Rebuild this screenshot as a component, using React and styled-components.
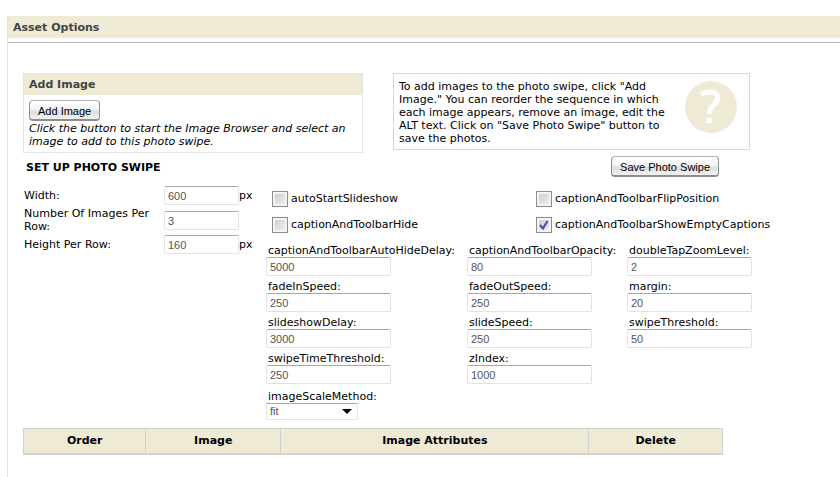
import React from "react";
import styled, { createGlobalStyle } from "styled-components";

const cream = "#efead6";
const line = "#d9d9d9";

const GlobalStyle = createGlobalStyle`
  *, *::before, *::after { box-sizing: border-box; }
  body {
    margin: 0;
    background: #fff;
    color: #000;
    font: 11px/13px Verdana, "DejaVu Sans", sans-serif;
  }
`;

const Page = styled.main`
  margin: 16px 0 0 7px;
  min-height: calc(100vh - 16px);
  border-left: 1px solid #e2e2e2;
`;

const PageTitle = styled.h1`
  margin: 0;
  padding: 1px 5px 0;
  background: ${cream};
  color: #444;
  font-size: 11px;
  line-height: 21px;
`;

const Content = styled.div`
  margin-top: 4px;
  padding: 30px 90px 0 15px;
  border-top: 1px solid #b8b8b8;
`;

const TopRow = styled.div`
  display: grid;
  grid-template-columns: 340fr 357fr;
  align-items: start;
  gap: 30px;
`;

const Panel = styled.section`
  border: 1px solid #e3e3e3;
  padding-bottom: 4px;
`;

const PanelTitle = styled.h2`
  margin: 0;
  padding: 0 5px;
  background: ${cream};
  color: #444;
  font-size: 11px;
  line-height: 21px;
`;

const PanelBody = styled.div`
  padding: 5px 5px 0;
`;

const Hint = styled.p`
  margin: 1px 0 0;
  font-style: italic;
`;

const Button = styled.button`
  display: block;
  height: 21px;
  padding: 1px 8px 0;
  border: 1px solid #8c8c8c;
  border-top-color: #b0b0b0;
  border-bottom-width: 2px;
  border-radius: 4px;
  background: linear-gradient(#fff 0%, #f3f3f3 45%, #dedede 60%, #f2f2f2 100%);
  color: #000;
  font: 11px/16px Arial, "Liberation Sans", sans-serif;
  white-space: nowrap;
`;

const Help = styled.aside`
  display: flex;
  gap: 4px;
  padding: 6px 12px 4px 5px;
  border: 1px solid ${line};
`;

const HelpText = styled.p`
  flex: 1;
  margin: 0;
`;

const HelpIcon = styled.svg`
  flex: none;
  width: 52px;
  height: 54px;
`;

const SetupBar = styled.div`
  display: flex;
  justify-content: space-between;
  align-items: center;
  margin-top: 3px;
  padding: 0 31px 0 3px;
`;

const SetupTitle = styled.h2`
  margin: 0;
  padding-top: 2px;
  font-size: 11px;
  line-height: 19px;
`;

const Form = styled.form`
  display: grid;
  grid-template-columns: 243px 1fr;
  margin-top: 9px;
`;

const SizeFields = styled.div`
  display: grid;
  grid-template-columns: 140px 75px auto;
  align-content: start;
  align-items: center;
  justify-content: start;
  row-gap: 2px;
  padding-left: 1px;
`;

const Input = styled.input`
  display: block;
  width: 100%;
  height: 19px;
  padding: 1px 3px 0;
  border: 1px solid #dfe2e8;
  border-top-color: #a5a7ab;
  border-radius: 2px;
  background: #fff;
  color: #555;
  font: 11px/16px Arial, "Liberation Sans", sans-serif;
`;

const Options = styled.div`
  min-width: 0;
`;

const Checks = styled.div`
  display: grid;
  grid-template-columns: 264px 1fr;
  row-gap: 10px;
  padding: 5px 0 0 6px;
`;

const CheckLabel = styled.label`
  display: flex;
  gap: 3px;
  height: 16px;
  line-height: 15px;
  white-space: nowrap;
`;

const Check = styled.input.attrs({ type: "checkbox" })`
  appearance: none;
  flex: none;
  width: 16px;
  height: 16px;
  margin: 0;
  border: 1px solid #8b8c8e;
  background: linear-gradient(135deg, #c5c9ce, #f3f4f5);
  box-shadow: inset 0 0 0 2px #f4f4f4;
  grid-area: 1 / 1;
`;

const CheckBox = styled.span`
  display: grid;
  place-items: center;
  width: 16px;
  height: 16px;

  svg { grid-area: 1 / 1; z-index: 1; display: none; pointer-events: none; }
  input:checked + svg { display: block; }
`;

const Fields = styled.div`
  display: grid;
  grid-template-columns: 201px 160px 125px;
  row-gap: 5px;
  margin-top: 12px;
`;

const Field = styled.div`
  width: 125px;
  padding-top: ${(p) => (p.$spaced ? "2px" : "0")};

  label {
    display: block;
    padding-left: 2px;
    line-height: 12px;
    white-space: nowrap;
  }
`;

const SelectBox = styled.div`
  display: grid;
  align-items: center;
  width: 92px;

  svg {
    grid-area: 1 / 1;
    justify-self: end;
    margin-right: 6px;
    pointer-events: none;
  }
`;

const Select = styled.select`
  appearance: none;
  grid-area: 1 / 1;
  height: 17px;
  padding: 0 3px;
  border: 1px solid #dfe2e8;
  border-top-color: #a5a7ab;
  border-radius: 0;
  background: #fff;
  color: #555;
  font: 11px/15px Arial, "Liberation Sans", sans-serif;
`;

const Table = styled.table`
  width: calc(100% - 27px);
  margin-top: 8px;
  border-collapse: collapse;
  table-layout: fixed;
`;

const Th = styled.th`
  width: ${(p) => p.$width};
  height: 25px;
  padding: 0;
  border: 1px solid #d2d2d2;
  border-bottom-width: 2px;
  background: ${cream};
`;

const sizes = [
  { id: "width", label: "Width:", value: "600", unit: "px" },
  { id: "perRow", label: "Number Of Images Per Row:", value: "3", unit: "" },
  { id: "rowHeight", label: "Height Per Row:", value: "160", unit: "px" },
];

const checks = [
  ["autoStartSlideshow", false],
  ["captionAndToolbarFlipPosition", false],
  ["captionAndToolbarHide", false],
  ["captionAndToolbarShowEmptyCaptions", true],
];

const fields = [
  ["captionAndToolbarAutoHideDelay", "5000"],
  ["captionAndToolbarOpacity", "80"],
  ["doubleTapZoomLevel", "2"],
  ["fadeInSpeed", "250"],
  ["fadeOutSpeed", "250"],
  ["margin", "20"],
  ["slideshowDelay", "3000"],
  ["slideSpeed", "250"],
  ["swipeThreshold", "50"],
  ["swipeTimeThreshold", "250"],
  ["zIndex", "1000"],
];

const columns = [
  ["Order", "17.5%"],
  ["Image", "19.3%"],
  ["Image Attributes", "44.1%"],
  ["Delete", "19.1%"],
];

export default function App() {
  return (
    <>
      <GlobalStyle />
      <Page>
        <PageTitle>Asset Options</PageTitle>
        <Content>
          <TopRow>
            <Panel>
              <PanelTitle>Add Image</PanelTitle>
              <PanelBody>
                <Button type="button">Add Image</Button>
                <Hint>
                  Click the button to start the Image Browser and select an
                  image to add to this photo swipe.
                </Hint>
              </PanelBody>
            </Panel>
            <Help>
              <HelpText>
                To add images to the photo swipe, click "Add Image." You can
                reorder the sequence in which each image appears, remove an
                image, edit the ALT text. Click on "Save Photo Swipe" button to
                save the photos.
              </HelpText>
              <HelpIcon viewBox="0 0 52 54" aria-hidden="true">
                <circle cx="26" cy="27" r="26" fill={cream} />
                <path
                  d="M16 14.5 Q20 12 25 12 Q32.500 12 32.500 18.500 Q32.500 22.500 28 25.500 Q24.500 28 24.500 34"
                  fill="none"
                  stroke="#fff"
                  strokeWidth="5"
                />
                <rect x="21" y="38" width="6" height="5" fill="#fff" />
              </HelpIcon>
            </Help>
          </TopRow>

          <SetupBar>
            <SetupTitle>SET UP PHOTO SWIPE</SetupTitle>
            <Button type="submit" form="setup">Save Photo Swipe</Button>
          </SetupBar>

          <Form id="setup" onSubmit={(e) => e.preventDefault()}>
            <SizeFields>
              {sizes.map((s) => (
                <React.Fragment key={s.id}>
                  <label htmlFor={s.id}>{s.label}</label>
                  <Input id={s.id} defaultValue={s.value} />
                  <span>{s.unit}</span>
                </React.Fragment>
              ))}
            </SizeFields>
            <Options>
              <Checks>
                {checks.map(([name, on]) => (
                  <CheckLabel key={name}>
                    <CheckBox>
                      <Check name={name} defaultChecked={on} />
                      <svg width="12" height="12" viewBox="0 0 12 12">
                        <path
                          d="M2 6 L5 9.5 L9.5 2"
                          fill="none"
                          stroke="#40579b"
                          strokeWidth="2.2"
                        />
                      </svg>
                    </CheckBox>
                    {name}
                  </CheckLabel>
                ))}
              </Checks>
              <Fields>
                {fields.map(([name, value]) => (
                  <Field key={name}>
                    <label htmlFor={name}>{name}:</label>
                    <Input id={name} defaultValue={value} />
                  </Field>
                ))}
                <span />
                <Field $spaced>
                  <label htmlFor="imageScaleMethod">imageScaleMethod:</label>
                  <SelectBox>
                    <Select id="imageScaleMethod" defaultValue="fit">
                      <option>fit</option>
                      <option>fitNoUpscale</option>
                      <option>zoom</option>
                    </Select>
                    <svg width="10" height="5" viewBox="0 0 10 5">
                      <path d="M0 0H10L5 5Z" />
                    </svg>
                  </SelectBox>
                </Field>
              </Fields>
            </Options>
          </Form>

          <Table>
            <thead>
              <tr>
                {columns.map(([name, width]) => (
                  <Th key={name} scope="col" $width={width}>
                    {name}
                  </Th>
                ))}
              </tr>
            </thead>
          </Table>
        </Content>
      </Page>
    </>
  );
}
